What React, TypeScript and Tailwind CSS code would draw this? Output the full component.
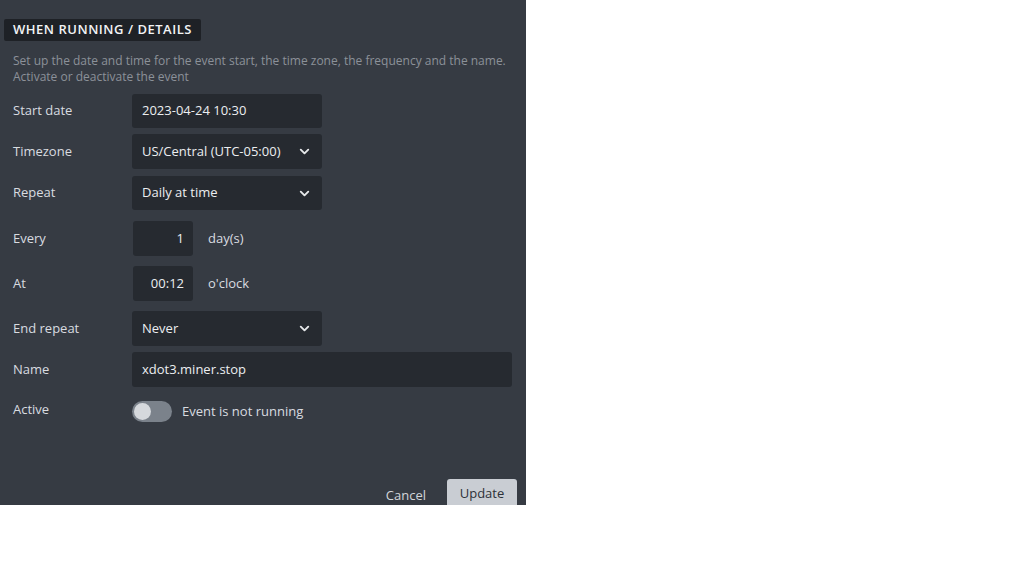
import { ChevronDown } from "lucide-react";

const font = { fontFamily: '"Open Sans", "Noto Sans", sans-serif' };

function Label({ children }: { children: React.ReactNode }) {
  return <div className="w-[119px] shrink-0 text-[13px] text-[#d9dce0]">{children}</div>;
}

function Select({ value }: { value: string }) {
  return (
    <div className="flex h-full w-[190px] items-center justify-between rounded-[3px] bg-[#262a30] pl-[10px] pr-[10px] text-[13px] text-[#eceef0]">
      <span>{value}</span>
      <ChevronDown size={15} strokeWidth={3} className="text-[#e6e8ea]" />
    </div>
  );
}

export default function App() {
  return (
    <div className="min-h-screen bg-white" style={font}>
      <div className="relative flex h-[505px] w-[526px] flex-col overflow-hidden bg-[#363b43]">
        {/* Section badge */}
        <div className="mt-[19px] ml-[4px] flex h-[22px] items-center self-start rounded-[2px] bg-[#1e2126] px-[9px] text-[13px] font-semibold tracking-[0.04em] text-[#f2f3f5] uppercase">
          When running / Details
        </div>

        <p className="mt-[12px] px-[13px] text-[12px] leading-[16px] text-[#8c9199]">
          Set up the date and time for the event start, the time zone, the frequency and the name.
          Activate or deactivate the event
        </p>

        <div className="flex flex-col px-[13px]">
          <div className="mt-[9px] flex h-[34px] items-center">
            <Label>Start date</Label>
            <div className="flex h-full w-[190px] items-center rounded-[3px] bg-[#262a30] px-[10px] text-[13px] text-[#eceef0]">
              2023-04-24 10:30
            </div>
          </div>

          <div className="mt-[6px] flex h-[35px] items-center">
            <Label>Timezone</Label>
            <Select value="US/Central (UTC-05:00)" />
          </div>

          <div className="mt-[7px] flex h-[34px] items-center">
            <Label>Repeat</Label>
            <Select value="Daily at time" />
          </div>

          <div className="mt-[11px] flex h-[35px] items-center">
            <Label>Every</Label>
            <div className="ml-[1px] flex h-full w-[60px] items-center justify-end rounded-[3px] bg-[#262a30] px-[9px] text-[13px] text-[#eceef0]">
              1
            </div>
            <span className="ml-[15px] text-[13px] text-[#d9dce0]">day(s)</span>
          </div>

          <div className="mt-[10px] flex h-[35px] items-center">
            <Label>At</Label>
            <div className="ml-[1px] flex h-full w-[60px] items-center justify-end rounded-[3px] bg-[#262a30] px-[9px] text-[13px] text-[#eceef0]">
              00:12
            </div>
            <span className="ml-[15px] text-[13px] text-[#d9dce0]">o'clock</span>
          </div>

          <div className="mt-[10px] flex h-[35px] items-center">
            <Label>End repeat</Label>
            <Select value="Never" />
          </div>

          <div className="mt-[6px] flex h-[35px] items-center">
            <Label>Name</Label>
            <div className="flex h-full w-[380px] items-center rounded-[3px] bg-[#262a30] px-[10px] text-[13px] text-[#eceef0]">
              xdot3.miner.stop
            </div>
          </div>

          <div className="mt-[14px] flex h-[21px] items-center">
            <div className="-mt-[3px]">
              <Label>Active</Label>
            </div>
            <div className="flex h-[21px] w-[40px] items-center rounded-full bg-[#7b828b] px-[2px]">
              <div className="h-[17px] w-[17px] rounded-full bg-[#d6d9dd]" />
            </div>
            <span className="ml-[10px] text-[13px] text-[#d9dce0]">Event is not running</span>
          </div>
        </div>

        <div className="mt-auto flex items-start justify-end gap-[21px] pr-[9px]">
          <span className="mt-[7px] text-[13px] text-[#d3d6da]">Cancel</span>
          <div className="-mb-[12px] flex h-[36px] w-[70px] items-start justify-center rounded-[3px] bg-[#c9cdd3] pt-[5px] text-[13px] text-[#2d3138]">
            Update
          </div>
        </div>
      </div>
    </div>
  );
}
